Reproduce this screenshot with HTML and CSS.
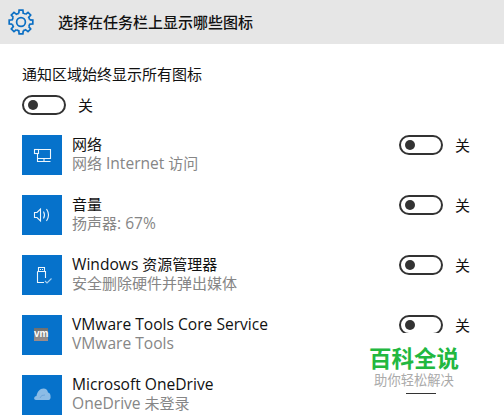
FILE: index.html
```html
<html>
<head>
  <meta charset="utf-8">
  <link rel="stylesheet" href="styles.css">
</head>

<body>
  <div class="header">
    <svg class="gear" width="26" height="26" viewBox="-13 -13 26 26">
      <defs>
        <path id="tooth" d="M-2.2 -8.7 L-1.9 -11.8 L1.9 -11.8 L2.2 -8.7 A9 9 0 0 1 4.6 -7.7"/>
      </defs>
      <use href="#tooth"/>
      <use href="#tooth" transform="rotate(45)"/>
      <use href="#tooth" transform="rotate(90)"/>
      <use href="#tooth" transform="rotate(135)"/>
      <use href="#tooth" transform="rotate(180)"/>
      <use href="#tooth" transform="rotate(225)"/>
      <use href="#tooth" transform="rotate(270)"/>
      <use href="#tooth" transform="rotate(315)"/>
      <circle r="4.4"/>
    </svg>
    <div class="header-title">选择在任务栏上显示哪些图标</div>
  </div>

  <div class="content">
    <div class="always-label">通知区域始终显示所有图标</div>
    <div class="switch-wrap always-switch">
      <div class="toggle"><div class="knob"></div></div>
      <span>关</span>
    </div>

    <div class="row">
      <div class="app-icon">
        <svg class="line-icon" width="40" height="40" viewBox="0 0 40 40">
          <path d="M16.5 14.5H28.5V23.5H15.5M22 23.5V26.5M15.5 18.5V26.5H28.5"/>
          <rect x="12.5" y="14.5" width="4" height="4"/>
        </svg>
      </div>
      <div class="app-text">
        <div class="app-name">网络</div>
        <div class="app-sub">网络 <span class="latin">Internet</span> 访问</div>
      </div>
      <div class="switch-wrap">
        <div class="toggle"><div class="knob"></div></div>
        <span>关</span>
      </div>
    </div>

    <div class="row">
      <div class="app-icon">
        <svg class="line-icon" width="40" height="40" viewBox="0 0 40 40">
          <path d="M12.5 17.5H15L18.5 14V26L15 22.5H12.5Z"/>
          <path d="M21.5 16.5Q23.5 20 21.5 23.5M24.5 14Q28.5 20 24.5 26"/>
        </svg>
      </div>
      <div class="app-text">
        <div class="app-name">音量</div>
        <div class="app-sub">扬声器<span class="latin">: 67%</span></div>
      </div>
      <div class="switch-wrap">
        <div class="toggle"><div class="knob"></div></div>
        <span>关</span>
      </div>
    </div>

    <div class="row">
      <div class="app-icon">
        <svg class="line-icon" width="40" height="40" viewBox="0 0 40 40">
          <path d="M16.500 16.500V12.500H22.500V16.500M15.500 16.500H23.500V23M22 27.500H15.500V16.500"/>
          <path d="M18 14.500H19M20 14.500H21"/>
          <path class="check" d="M23 26L25 28L29.500 23.500"/>
        </svg>
      </div>
      <div class="app-text">
        <div class="app-name"><span class="latin">Windows</span> 资源管理器</div>
        <div class="app-sub">安全删除硬件并弹出媒体</div>
      </div>
      <div class="switch-wrap">
        <div class="toggle"><div class="knob"></div></div>
        <span>关</span>
      </div>
    </div>

    <div class="row">
      <div class="app-icon">
        <div class="vm-logo">vm</div>
      </div>
      <div class="app-text">
        <div class="app-name"><span class="latin">VMware Tools Core Service</span></div>
        <div class="app-sub"><span class="latin">VMware Tools</span></div>
      </div>
      <div class="switch-wrap">
        <div class="toggle"><div class="knob"></div></div>
        <span>关</span>
      </div>
    </div>

    <div class="row">
      <div class="app-icon">
        <svg width="40" height="40" viewBox="0 0 40 40">
          <path class="cloud" d="M14 25C11.500 25 11.500 21.500 14.500 21C15 17 18 13.500 21.500 13.500C24 13.500 25.500 15 26 17.500C28 18 28.500 20 28.500 21C29 23 28 25 26.500 25Z"/>
          <path class="cloud-fold" d="M18 23Q19 19.500 23 20"/>
        </svg>
      </div>
      <div class="app-text">
        <div class="app-name"><span class="latin">Microsoft OneDrive</span></div>
        <div class="app-sub"><span class="latin">OneDrive</span> 未登录</div>
      </div>
    </div>
  </div>

  <!-- watermark sits on top of the last two rows -->
  <div class="watermark">
    <div class="wm-title">百科全说</div>
    <div class="wm-sub">助你轻松解决</div>
    <div class="wm-line"></div>
  </div>
</body>
</html>
```

FILE: styles.css
```css
body
{
  margin: 0;
  width: 504px;
  height: 419px;
  overflow: hidden;
  position: relative;
  background-color: white;
  color: #111111;
  font-family: "Open Sans", "Noto Sans CJK SC", sans-serif;
  font-size: 15px;
}

.header
{
  height: 44px;
  display: flex;
  align-items: center;
  background-color: #e6e6e6;
}
.gear
{
  margin-left: 8px;
  margin-right: 24px;
  fill: none;
  stroke: #0b6fc4;
  stroke-width: 1.7;
}
.header-title
{
  font-size: 15px;
  font-weight: 500;
  color: #111111;
  margin-bottom: 2px;
}

.content
{
  padding: 19px 34px 0 22px;
}
.always-label
{
  line-height: 22px;
}
.always-switch
{
  margin-top: 10px;
  margin-bottom: 20px;
}

.switch-wrap
{
  display: flex;
  align-items: center;
  gap: 12px;
  height: 20px;
  line-height: 20px;
}
.toggle
{
  width: 44px;
  height: 20px;
  box-sizing: border-box;
  border: 2.5px solid #333333;
  border-radius: 10px;
  display: flex;
  align-items: center;
  padding-left: 4px;
}
.knob
{
  width: 10px;
  height: 10px;
  border-radius: 50%;
  background-color: #333333;
}

.row
{
  display: flex;
  align-items: flex-start;
  height: 40px;
  margin-bottom: 20px;
}
.app-icon
{
  width: 40px;
  height: 40px;
  background-color: #0672cb;
  margin-right: 10px;
  display: flex;
  align-items: center;
  justify-content: center;
}
.app-text
{
  flex: 1;
  margin-top: -1px;
}
.app-name
{
  line-height: 20px;
}
.app-sub
{
  line-height: 20px;
  color: #868686;
  margin-top: -1px;
}
.latin
{
  font-size: 15.6px;
}

.line-icon
{
  fill: none;
  stroke: #eef6fc;
  stroke-width: 1.1;
}
.line-icon .check
{
  stroke: #a8d0f0;
}
.cloud
{
  fill: #8cbce6;
}
.cloud-fold
{
  fill: none;
  stroke: #6fa6da;
  stroke-width: 1;
}
.vm-logo
{
  width: 14px;
  height: 13px;
  margin: 0 2px 2px 0;
  background: linear-gradient(#6e6e6e, #8a8a8a 70%, #a08c88);
  color: white;
  font-family: "Liberation Sans", sans-serif;
  font-size: 10px;
  font-weight: bold;
  line-height: 12px;
  text-align: center;
}

.watermark
{
  position: absolute;
  left: 355px;
  top: 333px;
  width: 118px;
  height: 86px;
  background-color: white;
  text-align: center;
}
.wm-title
{
  margin-top: 13px;
  font-size: 22.5px;
  line-height: 23px;
  font-weight: bold;
  color: #22b83f;
  font-family: "Noto Sans CJK SC", sans-serif;
}
.wm-sub
{
  font-size: 13.3px;
  line-height: 16px;
  margin-top: 3px;
  color: #aaaaaa;
  font-family: "Noto Sans CJK SC", sans-serif;
}
.wm-line
{
  width: 30px;
  height: 1px;
  margin: 5px 0 0 51px;
  background-color: #333333;
}
```
